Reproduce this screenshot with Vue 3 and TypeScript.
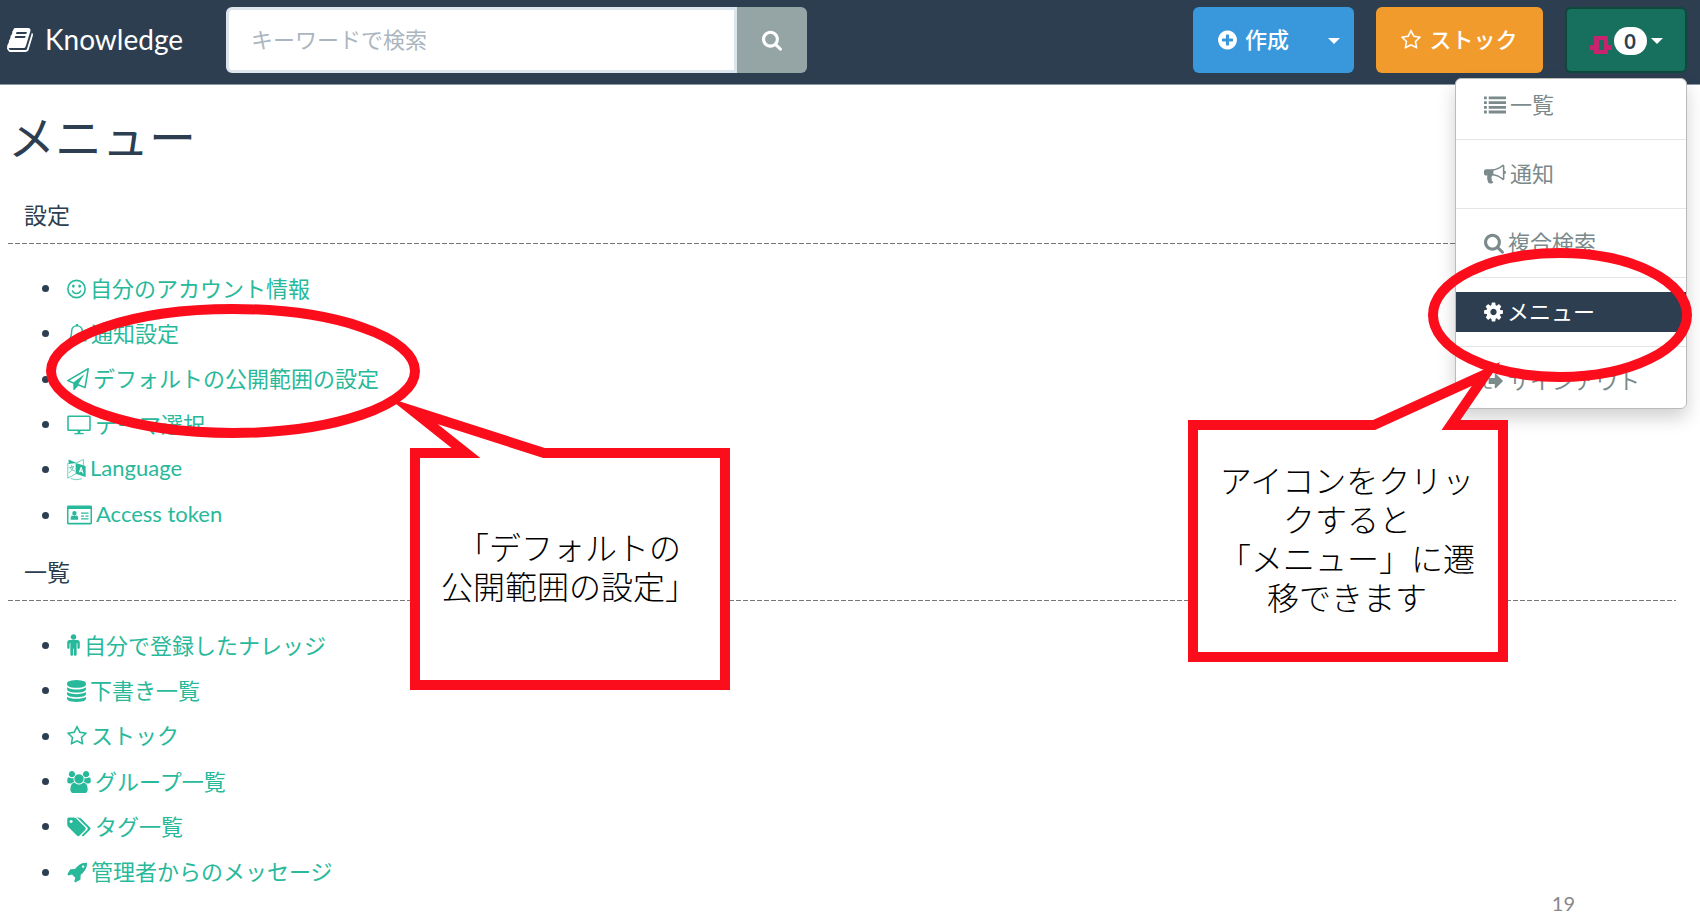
<script setup lang="ts">
import { h, ref } from 'vue'

interface Shape {
  box: [number, number]
  fill?: string
  line?: string
  lineWidth?: number
}

interface Entry {
  icon: string
  label: string
}

const star =
  'M1201 1004l306-297-422-62-189-382-189 382-422 62 306 297-73 421 378-199 377 199zm527-357q0 22-26 48l-363 354 86 500q1 7 1 20 0 50-41 50-19 0-40-12l-449-236-449 236q-22 12-40 12-21 0-31.500-14.500t-10.500-35.500q0-6 2-20l86-500-364-354q-25-27-25-48 0-37 56-46l502-73 225-455q19-41 49-41t49 41l225 455 502 73q56 9 56 46z'

// box: [left edge, width] on a grid 1792 units high
const shapes: Record<string, Shape> = {
  book: {
    box: [64, 1664],
    fill: 'M1639 478q40 57 18 129l-275 906q-19 64-76.500 107.500t-122.500 43.500h-923q-77 0-148.500-53.500t-99.500-131.500q-24-67-2-127 0-4 3-27t4-37q1-8-3-21.500t-3-19.500q2-11 8-21t16.500-23.500 16.500-23.500q23-38 45-91.500t30-91.500q3-10 .5-30t-.5-28q3-11 17-28t17-23q21-36 42-92t25-90q1-9-2.500-32t.5-28q4-13 22-30.500t22-22.500q19-26 42.500-84.500t27.500-96.500q1-8-3-25.500t-2-26.500q2-8 9-18t18-23 17-21q8-12 16.500-30.500t15-35 16-36 19.500-32 26.500-23.500 36-11.500 47.500 5.500l-1 3q38-9 51-9h761q74 0 114 56t18 130l-274 906q-36 119-71.500 153.500t-128.500 34.500h-869q-27 0-38 15-11 16-1 43 24 70 144 70h923q29 0 56-15.500t35-41.500l300-987q7-22 5-57 38 15 59 43zm-1064 2q-4 13 2 22.500t20 9.500h608q13 0 25.500-9.500t16.500-22.500l21-64q4-13-2-22.500t-20-9.500h-608q-13 0-25.500 9.500t-16.500 22.500zm-83 256q-4 13 2 22.500t20 9.500h608q13 0 25.500-9.500t16.500-22.500l21-64q4-13-2-22.500t-20-9.500h-608q-13 0-25.500 9.500t-16.500 22.500z',
  },
  search: {
    box: [64, 1664],
    fill: 'M1216 832q0-185-131.500-316.500t-316.500-131.500-316.500 131.500-131.500 316.500 131.500 316.500 316.500 131.500 316.500-131.500 131.500-316.500zm512 832q0 52-38 90t-90 38q-54 0-90-38l-343-342q-179 124-399 124-143 0-273.500-55.500t-225-150-150-225-55.500-273.500 55.500-273.500 150-225 225-150 273.500-55.500 273.500 55.500 225 150 150 225 55.500 273.500q0 220-124 399l343 343q37 37 37 90z',
  },
  plus: {
    box: [128, 1536],
    fill: 'M1344 960v-128q0-26-19-45t-45-19h-256v-256q0-26-19-45t-45-19h-128q-26 0-45 19t-19 45v256h-256q-26 0-45 19t-19 45v128q0 26 19 45t45 19h256v256q0 26 19 45t45 19h128q26 0 45-19t19-45v-256h256q26 0 45-19t19-45zm320-64q0 209-103 385.500t-279.500 279.500-385.500 103-385.500-103-279.500-279.500-103-385.500 103-385.500 279.500-279.500 385.500-103 385.500 103 279.500 279.500 103 385.500z',
  },
  star: { box: [64, 1664], fill: star },
  list: {
    box: [0, 1792],
    fill: 'M0 200h230v230H0zM384 200h1408v230H384zM0 584h230v230H0zM384 584h1408v230H384zM0 968h230v230H0zM384 968h1408v230H384zM0 1352h230v230H0zM384 1352h1408v230H384z',
  },
  bullhorn: {
    box: [0, 1792],
    fill: 'M1664 640q53 0 90.500 37.500t37.500 90.500-37.500 90.500-90.500 37.500v384q0 52-38 90t-90 38q-417-347-812-380-58 19-91 66t-31 100.500 40 92.500q-20 33-23 65.500t6 58 33.500 55 48 50 61.500 50.500q-29 58-111.500 83t-168.500 11.500-132-55.500q-7-23-29.500-87.500t-32-94.500-23-89-15-101 3.500-98.500 22-110.500h-122q-66 0-113-47t-47-113v-192q0-66 47-113t113-47h480q435 0 896-384 52 0 90 38t38 90v384zm-128 604v-954q-394 302-768 343v270q377 42 768 341z',
  },
  cog: {
    box: [128, 1536],
    fill: 'M1152 896q0-106-75-181t-181-75-181 75-75 181 75 181 181 75 181-75 75-181zm512-109v222q0 12-8 23t-20 13l-185 28q-19 54-39 91 35 50 107 138 10 12 10 25t-9 23q-27 37-99 108t-94 71q-12 0-26-9l-138-108q-44 23-91 38-16 136-29 186-7 28-36 28h-222q-14 0-24.500-8.500t-11.500-21.500l-28-184q-49-16-90-37l-141 107q-10 9-25 9-14 0-25-11-126-114-165-168-7-10-7-23 0-12 8-23 15-21 51-66.500t54-70.500q-27-50-41-99l-183-27q-13-2-21-12.500t-8-23.500v-222q0-12 8-23t19-13l186-28q14-46 39-92-40-57-107-138-10-12-10-24 0-10 9-23 26-36 98.500-107.500t94.500-71.500q13 0 26 10l138 107q44-23 91-38 16-136 29-186 7-28 36-28h222q14 0 24.500 8.500t11.500 21.500l28 184q49 16 90 37l142-107q9-9 24-9 13 0 25 10 129 119 165 170 7 8 7 22 0 12-8 23-15 21-51 66.500t-54 70.500q26 50 41 98l183 28q13 2 21 12.500t8 23.500z',
  },
  signout: {
    box: [64, 1664],
    fill: 'M704 1440q0 4 1 20t.5 26.500-3 23.500-10 19.500-20.500 6.500h-320q-119 0-203.500-84.500t-84.500-203.500v-704q0-119 84.500-203.500t203.500-84.500h320q13 0 22.500 9.500t9.500 22.500q0 4 1 20t.5 26.500-3 23.500-10 19.500-20.500 6.500h-320q-66 0-113 47t-47 113v704q0 66 47 113t113 47h312l11.500 1 11.500 3 8 5.500 7 9 2 13.500zm928-544q0 26-19 45l-544 544q-19 19-45 19t-45-19-19-45v-288h-448q-26 0-45-19t-19-45v-384q0-26 19-45t45-19h448v-288q0-26 19-45t45-19 45 19l544 544q19 19 19 45z',
  },
  smile: {
    box: [0, 1536],
    fill: 'M400 656a112 128 0 1 0 224 0a112 128 0 1 0-224 0zM912 656a112 128 0 1 0 224 0a112 128 0 1 0-224 0z',
    line: 'M64 896a704 704 0 1 0 1408 0a704 704 0 1 0-1408 0zM440 1056Q530 1260 768 1260T1096 1056',
    lineWidth: 130,
  },
  bell: {
    box: [0, 1664],
    fill: 'M640 1536h384q0 190-192 190t-192-190zM736 60h192v180H736z',
    line: 'M832 220C520 220 380 440 380 720C380 1080 280 1280 90 1450H1574C1384 1280 1284 1080 1284 720C1284 440 1144 220 832 220z',
    lineWidth: 120,
  },
  plane: {
    box: [0, 1792],
    fill: 'M1764 11q33 24 27 64l-256 1536q-5 29-32 45-14 8-31 8-11 0-24-5l-527-215-298 327q-18 21-47 21-14 0-23-4-19-7-30-23.500t-11-36.500v-452l-472-193q-37-14-40-55-3-39 32-59l1664-960q35-21 68 2zm-342 1499l221-1323-1434 827 336 137 863-639-478 797z',
  },
  desktop: {
    box: [0, 1920],
    fill: 'M850 1340h220v210h240q40 0 40 50t-40 50H610q-40 0-40-50t40-50h240z',
    line: 'M120 180h1680q56 0 56 56v1040q0 56-56 56H120q-56 0-56-56V236q0-56 56-56z',
    lineWidth: 125,
  },
  language: {
    box: [0, 1536],
    fill: 'M120 40L800 330L120 400zM700 330L1510 560V1470L700 1200zM960 1060L1120 640L1190 660L1350 1200L1250 1165L1220 1050L1090 1010L1060 1095zM1120 910L1195 935L1160 790z',
    line: 'M800 290L1330 40V490M60 350V1560L720 1210M180 720L540 610M370 540V650M500 640Q440 940 170 1120M260 740Q380 920 610 980M330 1600Q700 1780 1180 1620',
    lineWidth: 55,
  },
  idcard: {
    box: [0, 2048],
    fill: 'M60 170h1928v230H60zM1150 700h610v100h-610zM1150 940h240v100h-240zM1510 940h250v100h-250zM1150 1170h610v100h-610zM430 760a180 190 0 1 0 360 0a180 190 0 1 0-360 0zM300 1290q-20-330 150-360q160 110 320 0q170 30 150 360z',
    line: 'M110 190h1828q50 0 50 50v1312q0 50-50 50H110q-50 0-50-50V240q0-50 50-50z',
    lineWidth: 125,
  },
  male: {
    box: [0, 1024],
    fill: 'M1024 608v416q0 40-28 68t-68 28-68-28-28-68v-352h-64v912q0 46-33 79t-79 33-79-33-33-79v-464h-64v464q0 46-33 79t-79 33-79-33-33-79v-912h-64v352q0 40-28 68t-68 28-68-28-28-68v-416q0-80 56-136t136-56h640q80 0 136 56t56 136zm-288-448q0 93-65.500 158.500t-158.500 65.500-158.500-65.500-65.500-158.500 65.500-158.500 158.500-65.500 158.500 65.500 65.500 158.500z',
  },
  database: {
    box: [0, 1536],
    fill: 'M768 768q237 0 443-43t325-127v170q0 69-103 128t-280 93.500-385 34.500-385-34.500-280-93.500-103-128v-170q119 84 325 127t443 43zm0 768q237 0 443-43t325-127v170q0 69-103 128t-280 93.500-385 34.500-385-34.500-280-93.500-103-128v-170q119 84 325 127t443 43zm0-384q237 0 443-43t325-127v170q0 69-103 128t-280 93.500-385 34.500-385-34.500-280-93.500-103-128v-170q119 84 325 127t443 43zm0-1152q208 0 385 34.500t280 93.500 103 128v128q0 69-103 128t-280 93.500-385 34.500-385-34.500-280-93.500-103-128v-128q0-69 103-128t280-93.500 385-34.500z',
  },
  users: {
    box: [0, 1920],
    fill: 'M593 896q-162 5-265 128h-134q-82 0-138-40.500t-56-118.500q0-353 124-353 6 0 43.500 21t97.500 42.500 119 21.500q67 0 133-23-5 37-5 66 0 139 81 256zm1071 637q0 120-73 189.500t-194 69.500h-874q-121 0-194-69.500t-73-189.500q0-53 3.500-103.500t14-109 26.500-108.500 43-97.500 62-81 85.500-53.500 111.500-20q10 0 43 21.500t73 48 107 48 135 21.500 135-21.500 107-48 73-48 43-21.500q61 0 111.500 20t85.500 53.500 62 81 43 97.500 26.500 108.500 14 109 3.500 103.500zm-1024-1277q0 106-75 181t-181 75-181-75-75-181 75-181 181-75 181 75 75 181zm704 384q0 159-112.500 271.500t-271.500 112.500-271.500-112.500-112.500-271.500 112.500-271.500 271.500-112.500 271.500 112.500 112.500 271.500zm576 225q0 78-56 118.500t-138 40.500h-134q-103-123-265-128 81-117 81-256 0-29-5-66 66 23 133 23 59 0 119-21.500t97.500-42.500 43.500-21q124 0 124 353zm-128-609q0 106-75 181t-181 75-181-75-75-181 75-181 181-75 181 75 75 181z',
  },
  tags: {
    box: [0, 1920],
    fill: 'M448 448q0-53-37.500-90.500t-90.500-37.500-90.500 37.500-37.500 90.500 37.500 90.500 90.500 37.500 90.500-37.500 37.500-90.500zm1067 576q0 53-37 90l-491 492q-39 37-91 37-53 0-90-37l-715-716q-38-37-64.500-101t-26.500-117v-416q0-52 38-90t90-38h416q53 0 117 26.500t102 64.500l715 714q37 39 37 91zm384 0q0 53-37 90l-491 492q-39 37-91 37-36 0-59-14t-53-45l470-470q37-37 37-90 0-52-37-91l-715-714q-38-38-102-64.500t-117-26.500h224q53 0 117 26.500t102 64.500l715 714q37 39 37 91z',
  },
  rocket: {
    box: [0, 1664],
    fill: 'M1440 448q0-40-28-68t-68-28-68 28-28 68 28 68 68 28 68-28 28-68zm224-288q0 249-75.500 430.500t-253.500 360.500q-81 80-195 176l-20 379q-2 16-16 26l-384 224q-7 4-16 4-12 0-23-9l-64-64q-13-14-8-32l85-276-281-281-276 85q-3 1-9 1-14 0-23-9l-64-64q-17-19-5-39l224-384q10-14 26-16l379-20q96-114 176-195 188-187 358-258t431-71q14 0 24 9.500t10 22.500z',
  },
}

const Glyph = (props: { name: string; size?: number }) => {
  const shape = shapes[props.name]
  const size = props.size ?? 22
  const [left, width] = shape.box
  return h(
    'svg',
    {
      viewBox: `${left} 0 ${width} 1792`,
      width: Math.round((size * width) / 1792),
      height: size,
      overflow: 'visible',
      'aria-hidden': 'true',
    },
    [
      shape.fill ? h('path', { d: shape.fill, fill: 'currentColor', 'fill-rule': 'evenodd' }) : null,
      shape.line
        ? h('path', {
            d: shape.line,
            fill: 'none',
            stroke: 'currentColor',
            'stroke-width': shape.lineWidth,
            'stroke-linecap': 'round',
            'stroke-linejoin': 'round',
          })
        : null,
    ],
  )
}
Glyph.props = ['name', 'size']

const keyword = ref('')

const sections: { title: string; items: Entry[] }[] = [
  {
    title: '設定',
    items: [
      { icon: 'smile', label: '自分のアカウント情報' },
      { icon: 'bell', label: '通知設定' },
      { icon: 'plane', label: 'デフォルトの公開範囲の設定' },
      { icon: 'desktop', label: 'テーマ選択' },
      { icon: 'language', label: 'Language' },
      { icon: 'idcard', label: 'Access token' },
    ],
  },
  {
    title: '一覧',
    items: [
      { icon: 'male', label: '自分で登録したナレッジ' },
      { icon: 'database', label: '下書き一覧' },
      { icon: 'star', label: 'ストック' },
      { icon: 'users', label: 'グループ一覧' },
      { icon: 'tags', label: 'タグ一覧' },
      { icon: 'rocket', label: '管理者からのメッセージ' },
    ],
  },
]

const menu: Entry[] = [
  { icon: 'list', label: '一覧' },
  { icon: 'bullhorn', label: '通知' },
  { icon: 'search', label: '複合検索' },
  { icon: 'cog', label: 'メニュー' },
  { icon: 'signout', label: 'サインアウト' },
]
const current = 'メニュー'
</script>

<template>
  <div class="page">
    <header class="navbar">
      <a class="brand" href="#"><Glyph name="book" :size="28" /><span>Knowledge</span></a>
      <form class="search" @submit.prevent>
        <input v-model="keyword" type="text" placeholder="キーワードで検索" aria-label="キーワードで検索" />
        <button type="submit" aria-label="検索"><Glyph name="search" /></button>
      </form>
      <div class="actions">
        <div class="split">
          <button type="button" class="create"><Glyph name="plus" /><span>作成</span></button>
          <button type="button" class="toggle" aria-label="作成メニュー"><i class="caret"></i></button>
        </div>
        <button type="button" class="stock"><Glyph name="star" /><span>ストック</span></button>
        <div class="account">
          <button type="button" class="user" aria-expanded="true">
            <svg class="avatar" viewBox="0 0 22 18" width="22" height="18" aria-hidden="true">
              <path d="M4 0h14v9h4v5h-4v4H4v-4H0V9h4zM9 4v10h5V4z" fill-rule="evenodd" />
            </svg>
            <span class="badge">0</span>
            <i class="caret"></i>
          </button>
          <ul class="dropdown">
            <li v-for="entry in menu" :key="entry.label">
              <a href="#" :class="{ active: entry.label === current }">
                <Glyph :name="entry.icon" /><span>{{ entry.label }}</span>
              </a>
            </li>
          </ul>
        </div>
      </div>
    </header>

    <main>
      <h1>メニュー</h1>
      <section v-for="section in sections" :key="section.title">
        <h2>{{ section.title }}</h2>
        <ul class="links">
          <li v-for="item in section.items" :key="item.label">
            <a href="#"><Glyph :name="item.icon" /><span>{{ item.label }}</span></a>
          </li>
        </ul>
      </section>
    </main>

    <footer>19</footer>

    <div class="note note-left">
      <svg viewBox="0 0 690 400" width="690" height="400" aria-hidden="true">
        <path class="bubble" d="M375 153H426L373 111L504 153H685V385H375z" />
        <ellipse cx="193" cy="71" rx="182" ry="62" />
      </svg>
      <p>「デフォルトの<br />公開範囲の設定」</p>
    </div>

    <div class="note note-right">
      <svg viewBox="0 0 520 430" width="520" height="430" aria-hidden="true">
        <path class="bubble" d="M13 185H194L306 134L271 185H323V417H13z" />
        <ellipse cx="380" cy="75" rx="127" ry="62" />
      </svg>
      <p>アイコンをクリックすると<br />「メニュー」に遷移できます</p>
    </div>
  </div>
</template>

<style>
body {
  margin: 0;
  background: #fff;
}
</style>

<style scoped>
.page {
  position: relative;
  overflow: hidden;
  font-family: Lato, 'Noto Sans CJK JP', sans-serif;
  font-size: 22px;
  color: #2c3e50;
}

a {
  text-decoration: none;
}

button,
input {
  font: inherit;
  margin: 0;
  border: 0;
}

button {
  color: #fff;
  cursor: pointer;
}

ul {
  list-style: none;
  margin: 0;
  padding: 0;
}

.navbar {
  display: flex;
  align-items: flex-start;
  box-sizing: border-box;
  height: 85px;
  padding: 7px 13px 0 8px;
  background: #2c3e50;
  border-bottom: 1px solid #8d99a8;
}

.brand {
  flex: 0 0 218px;
  display: flex;
  align-items: center;
  gap: 11px;
  height: 66px;
  font-size: 28px;
  color: #fff;
}

.brand span {
  padding-bottom: 2px;
}

.search {
  flex: 0 1 581px;
  display: flex;
  height: 66px;
}

.search input {
  flex: 1;
  min-width: 0;
  box-sizing: border-box;
  padding: 0 22px 2px;
  border: 3px solid #dce4ec;
  border-radius: 6px 0 0 6px;
  background: #fff;
  color: #2c3e50;
}

.search input::placeholder {
  color: #acb6c0;
  opacity: 1;
}

.search button {
  flex: 0 0 70px;
  display: flex;
  align-items: center;
  justify-content: center;
  padding: 0;
  border-radius: 0 6px 6px 0;
  background: #95a5a6;
}

.actions {
  display: flex;
  gap: 22px;
  margin-left: auto;
}

.split {
  display: flex;
  height: 66px;
}

.create,
.stock {
  display: flex;
  align-items: center;
  justify-content: center;
  gap: 8px;
  height: 66px;
  padding: 0;
  font-weight: 500;
}

.create span,
.stock span {
  padding-bottom: 4px;
}

.create {
  width: 121px;
  border-radius: 6px 0 0 6px;
  background: #3998db;
}

.toggle {
  display: flex;
  align-items: center;
  justify-content: center;
  width: 40px;
  padding: 2px 0 0;
  border-radius: 0 6px 6px 0;
  background: #3998db;
}

.stock {
  width: 167px;
  border-radius: 6px;
  background: #f19b2c;
}

.caret {
  border: 6px solid transparent;
  border-top-color: #fff;
  border-bottom: 0;
}

.account {
  position: relative;
}

.user {
  display: flex;
  align-items: center;
  justify-content: center;
  gap: 2px;
  box-sizing: border-box;
  width: 122px;
  height: 66px;
  padding: 2px 0 0;
  border: 2px solid #0c4a3b;
  border-radius: 6px;
  background: #176f5d;
}

.avatar {
  fill: #c7246f;
  margin-top: 8px;
}

.badge {
  box-sizing: border-box;
  width: 33px;
  height: 28px;
  border-radius: 14px;
  background: #fff;
  color: #2c3e50;
  font-size: 20px;
  font-weight: 700;
  line-height: 28px;
  margin-right: 2px;
}

.dropdown {
  position: absolute;
  top: 71px;
  right: 0;
  z-index: 1;
  width: 230px;
  padding: 6px 0 7px;
  border: 1px solid #bbb;
  border-radius: 6px;
  background: #fff;
  box-shadow: 0 9px 18px rgba(0, 0, 0, 0.18);
}

.dropdown li + li {
  margin-top: 14px;
  padding-top: 14px;
  border-top: 1px solid #e5e5e5;
}

.dropdown a {
  display: flex;
  align-items: center;
  gap: 4px;
  height: 40px;
  padding-left: 28px;
  line-height: 40px;
  color: #7b8a8b;
}

.dropdown span {
  padding-bottom: 1px;
}

.dropdown a.active {
  background: #2c3e50;
  color: #fff;
}

main {
  padding: 0 24px 0 8px;
}

h1 {
  margin: 0;
  padding: 20px 0 20px;
  font-size: 47px;
  font-weight: 400;
  line-height: 64px;
}

h2 {
  margin: 0;
  padding: 9px 16px 11px;
  font-size: 23px;
  font-weight: 400;
  line-height: 35px;
  background: repeating-linear-gradient(90deg, #777 0 5px, transparent 5px 7px) left bottom / 100% 1px no-repeat;
}

.links {
  display: grid;
  grid-auto-rows: 1fr;
  min-height: 272px;
  padding: 22px 0 8px 34px;
}

.links li {
  display: flex;
  align-items: center;
}

.links li::before {
  content: '';
  width: 7px;
  height: 7px;
  margin-right: 18px;
  border-radius: 50%;
  background: #2c3e50;
}

.links a {
  display: flex;
  align-items: center;
  gap: 4px;
  color: #28b99a;
}

.links span {
  padding-bottom: 4px;
}

footer {
  margin-top: -12px;
  padding-right: 125px;
  font-size: 20px;
  line-height: 24px;
  text-align: right;
  color: #888;
}

.note {
  position: absolute;
  z-index: 2;
  pointer-events: none;
}

.note svg {
  display: block;
  fill: none;
  stroke: #fc0d1b;
  stroke-width: 10px;
  stroke-miterlimit: 10;
}

.note .bubble {
  fill: #fff;
}

.note p {
  position: absolute;
  width: 270px;
  margin: 0;
  font-family: 'Noto Sans CJK JP', sans-serif;
  font-size: 32px;
  font-weight: 300;
  line-height: 39px;
  text-align: center;
  color: #000;
}

.note-left {
  left: 40px;
  top: 300px;
}

.note-left p {
  left: 394px;
  top: 227px;
}

.note-right {
  right: 0;
  top: 240px;
}

.note-right p {
  left: 32px;
  top: 220px;
}
</style>
